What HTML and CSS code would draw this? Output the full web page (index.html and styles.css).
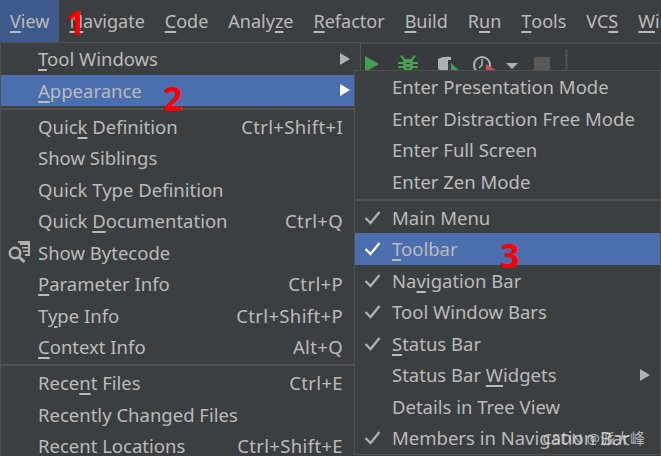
FILE: index.html
```html
<!DOCTYPE html>
<html lang="en">
<head>
<meta charset="utf-8">
<title>View menu</title>
<link rel="stylesheet" href="styles.css">
</head>
<body>
<div class="ide">
  <nav class="menubar">
    <span class="top active"><u>V</u>iew</span>
    <span class="top"><u>N</u>avigate</span>
    <span class="top"><u>C</u>ode</span>
    <span class="top">Analy<u>z</u>e</span>
    <span class="top"><u>R</u>efactor</span>
    <span class="top"><u>B</u>uild</span>
    <span class="top">R<u>u</u>n</span>
    <span class="top"><u>T</u>ools</span>
    <span class="top">VC<u>S</u></span>
    <span class="top"><u>W</u>indow</span>
  </nav>
  <div class="toolbar">
    <svg class="tool-icons" width="210" height="28" viewBox="0 0 210 28">
      <path d="M5 14 L19 22 L5 30Z" fill="#499c54"/>
      <path d="M42 13l3 4h6l3-4 2 1-3 4v2h5v2h-5v2h5v2h-5l-1 2H44l-1-2h-5v-2h5v-2h-5v-2h5v-2l-3-4Z" fill="#499c54"/>
      <path d="M46 21h4v1h-4zM46 25h4v1h-4z" fill="#3c3f41"/>
      <path d="M78 17q5-3 13-2v13H80q-2 0-2-2Z" fill="#afb1b3"/>
      <path d="M88 18h3v10h-3Z" fill="#3c3f41"/>
      <path d="M91 21l9 8H91Z" fill="#499c54"/>
      <circle cx="122" cy="23" r="8" fill="none" stroke="#afb1b3" stroke-width="2"/>
      <path d="M122 17v6l-3 3" fill="none" stroke="#afb1b3" stroke-width="1.6"/>
      <path d="M126 22l11 7h-11Z" fill="#c75450"/>
      <path d="M146 21h12l-6 6Z" fill="#afb1b3"/>
      <path d="M174 15h16v14h-16Z" fill="#5a5a5a"/>
      <path d="M206.500 7v21" stroke="#515151" stroke-width="2"/>
    </svg>
  </div>

  <div class="menu main-menu">
    <div class="row"><span class="label"><u>T</u>ool Windows</span><i class="arrow"></i></div>
    <div class="row sel"><span class="label"><u>A</u>ppearance</span><i class="arrow"></i></div>
    <hr class="sep">
    <div class="row"><span class="label">Quic<u>k</u> Definition</span><span class="keys">Ctrl+Shift+I</span></div>
    <div class="row"><span class="label">Show Siblings</span></div>
    <div class="row"><span class="label">Quick Type Definition</span></div>
    <div class="row"><span class="label">Quick <u>D</u>ocumentation</span><span class="keys">Ctrl+Q</span></div>
    <div class="row">
      <svg class="lead-icon" width="22" height="22" viewBox="0 0 22 22">
        <path d="M10 0h12v15h-5v-2h3v-2h-5V9.500h5V7.500h-6V6h6V4h-8V2h-2Z" fill="#afb1b3"/>
        <circle cx="7" cy="12" r="5.200" fill="none" stroke="#afb1b3" stroke-width="2.400"/>
        <path d="M11 16l5.500 5" stroke="#afb1b3" stroke-width="3"/>
      </svg>
      <span class="label">Show Bytecode</span>
    </div>
    <div class="row"><span class="label"><u>P</u>arameter Info</span><span class="keys">Ctrl+P</span></div>
    <div class="row"><span class="label">T<u>y</u>pe Info</span><span class="keys">Ctrl+Shift+P</span></div>
    <div class="row"><span class="label"><u>C</u>ontext Info</span><span class="keys">Alt+Q</span></div>
    <hr class="sep">
    <div class="row"><span class="label">Rece<u>n</u>t Files</span><span class="keys">Ctrl+E</span></div>
    <div class="row"><span class="label">Recently Changed Files</span></div>
    <div class="row"><span class="label">Recent Locations</span><span class="keys">Ctrl+Shift+E</span></div>
  </div>

  <div class="menu sub-menu">
    <div class="row"><span class="label">Enter Presentation Mode</span></div>
    <div class="row"><span class="label">Enter Distraction Free Mode</span></div>
    <div class="row"><span class="label">Enter Full Screen</span></div>
    <div class="row"><span class="label">Enter Zen Mode</span></div>
    <hr class="sep">
    <div class="row"><svg class="check" width="17" height="15" viewBox="0 0 17 15"><path d="M1.500 8l5 5L15.500 2"/></svg><span class="label">Main Menu</span></div>
    <div class="row sel"><svg class="check" width="17" height="15" viewBox="0 0 17 15"><path d="M1.500 8l5 5L15.500 2"/></svg><span class="label"><u>T</u>oolbar</span></div>
    <div class="row"><svg class="check" width="17" height="15" viewBox="0 0 17 15"><path d="M1.500 8l5 5L15.500 2"/></svg><span class="label">Na<u>v</u>igation Bar</span></div>
    <div class="row"><svg class="check" width="17" height="15" viewBox="0 0 17 15"><path d="M1.500 8l5 5L15.500 2"/></svg><span class="label">Tool Window Bars</span></div>
    <div class="row"><svg class="check" width="17" height="15" viewBox="0 0 17 15"><path d="M1.500 8l5 5L15.500 2"/></svg><span class="label"><u>S</u>tatus Bar</span></div>
    <div class="row"><span class="label">Status Bar <u>W</u>idgets</span><i class="arrow"></i></div>
    <div class="row"><span class="label">Details in Tree View</span></div>
    <div class="row"><svg class="check" width="17" height="15" viewBox="0 0 17 15"><path d="M1.500 8l5 5L15.500 2"/></svg><span class="label">Members in Navigation Bar</span></div>
  </div>

  <span class="mark mark-1">1</span>
  <span class="mark mark-2">2</span>
  <span class="mark mark-3">3</span>
  <span class="watermark">CSDN @派大峰</span>
</div>
</body>
</html>
```
FILE: styles.css
```css
* { box-sizing: border-box; }
html, body { margin: 0; padding: 0; }
body { background: #3c3f41; overflow: hidden; }
.ide {
  position: relative;
  width: 661px;
  height: 456px;
  overflow: hidden;
  background: #3c3f41;
  color: #bbbbbb;
  font-family: "Noto Sans", "Noto Sans CJK SC", sans-serif;
  font-size: 18.5px;
}
u { text-underline-offset: 3px; text-decoration-thickness: 1.5px; }

.menubar {
  display: flex;
  height: 42px;
  align-items: stretch;
  font-size: 18px;
  white-space: nowrap;
}
.top { display: flex; align-items: center; padding: 0 10px; flex: none; }
.top.active { background: #3f5a8c; }

.toolbar { height: 28px; padding-left: 360px; box-shadow: inset 0 2px #4a4c4e; background: #383b3d; }
.tool-icons { display: block; }

.menu {
  position: absolute;
  background: #3c3f41;
  border: 1px solid #515151;
}
.main-menu { left: 0; top: 42px; width: 361px; height: 430px; }
.sub-menu { left: 354px; top: 70px; width: 307px; height: 385px; }

.row {
  position: relative;
  display: flex;
  align-items: center;
  justify-content: space-between;
  height: 31.5px;
  padding: 0 17px 0 37px;
  white-space: nowrap;
}
.keys { letter-spacing: 0.35px; }
.row.sel { background: #4b6eaf; }
.sep {
  height: 2px;
  margin: 1.5px 0 1px;
  border: 0;
  background: #515151;
}
.arrow {
  display: block;
  width: 0;
  height: 0;
  margin-right: -7px;
  border-left: 10px solid #afb1b3;
  border-top: 6.5px solid transparent;
  border-bottom: 6.5px solid transparent;
}
.row.sel .arrow { border-left-color: #fff; }
.lead-icon { position: absolute; left: 7px; top: 4px; }
.check { position: absolute; left: 9px; top: 8px; fill: none; stroke: #afb1b3; stroke-width: 2.2; }
.row.sel .check { stroke: #fff; }

.mark {
  position: absolute;
  color: #ff0000;
  font-family: "Noto Sans", sans-serif;
  font-weight: 700;
  font-size: 34px;
  line-height: 40px;
}
.mark-1 { left: 66px; top: 2px; }
.mark-2 { left: 163px; top: 78px; }
.mark-3 { left: 500px; top: 235px; }

.watermark {
  position: absolute;
  right: 16px;
  top: 427px;
  font-size: 15px;
  line-height: 22px;
  color: rgba(220, 220, 220, 0.75);
  white-space: nowrap;
}
```
